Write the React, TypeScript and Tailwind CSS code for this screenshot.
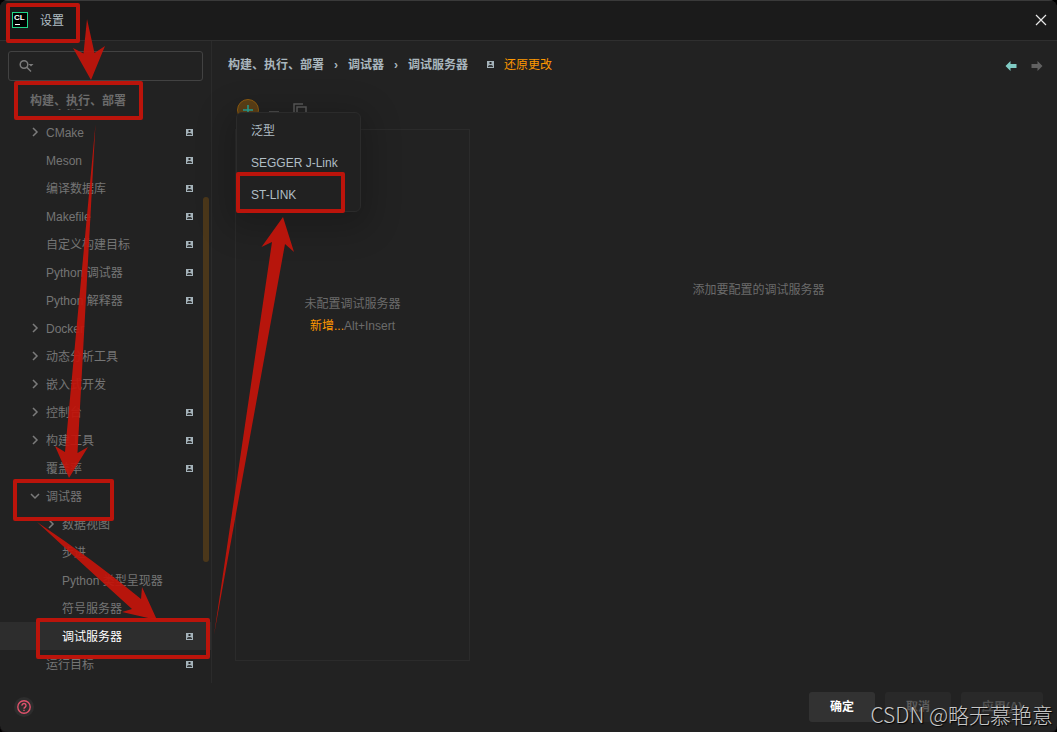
import { useState } from "react";
import clsx from "clsx";

type TreeItem = {
  label: string;
  level: 1 | 2;
  arrow?: "right" | "down";
  project?: boolean;
};

const items: TreeItem[] = [
  { label: "工具链", level: 1 },
  { label: "CMake", level: 1, arrow: "right", project: true },
  { label: "Meson", level: 1, project: true },
  { label: "编译数据库", level: 1, project: true },
  { label: "Makefile", level: 1, project: true },
  { label: "自定义构建目标", level: 1, project: true },
  { label: "Python 调试器", level: 1, project: true },
  { label: "Python 解释器", level: 1, project: true },
  { label: "Docker", level: 1, arrow: "right" },
  { label: "动态分析工具", level: 1, arrow: "right" },
  { label: "嵌入式开发", level: 1, arrow: "right" },
  { label: "控制台", level: 1, arrow: "right", project: true },
  { label: "构建工具", level: 1, arrow: "right", project: true },
  { label: "覆盖率", level: 1, project: true },
  { label: "调试器", level: 1, arrow: "down" },
  { label: "数据视图", level: 2, arrow: "right" },
  { label: "步进", level: 2 },
  { label: "Python 类型呈现器", level: 2 },
  { label: "符号服务器", level: 2 },
  { label: "调试服务器", level: 2, project: true },
  { label: "运行目标", level: 1, project: true },
];

const serverTypes = ["泛型", "SEGGER J-Link", "ST-LINK"];

function ProjectBadge() {
  return (
    <svg width="7" height="7" viewBox="0 0 7 7" className="shrink-0">
      <rect width="7" height="7" fill="#a5b3ba" />
      <rect x="2.5" y="1" width="2" height="2" fill="#222" />
      <path d="M1 6V5l1.5-1h2L6 5v1z" fill="#222" fillOpacity="0.85" />
    </svg>
  );
}

function Chevron({ dir }: { dir?: "right" | "down" }) {
  return (
    <svg width="12" height="12" viewBox="0 0 12 12" fill="none" stroke="#7b7b7b" strokeWidth="1.5" className="shrink-0">
      {dir === "right" && <path d="M4 2l4 4-4 4" />}
      {dir === "down" && <path d="M2 4l4 4 4-4" />}
    </svg>
  );
}

function TitleBar() {
  return (
    <header className="flex h-[41px] items-center border-t border-b border-t-[#3a3a3a] border-b-[#2f2f2f] bg-[#1b1b1b] pr-[10px] pb-px pl-3">
      <svg width="16" height="16" viewBox="0 0 16 16">
        <rect x="0.5" y="0.5" width="15" height="15" fill="#000" stroke="#21d789" />
        <text x="2" y="8" fontSize="8" fontWeight="700" fill="#fff">CL</text>
        <rect x="3" y="12" width="5" height="1" fill="#fff" />
      </svg>
      <h1 className="ml-3 flex-1 pt-[2px] text-[#b0bec5]">设置</h1>
      <button type="button" aria-label="关闭">
        <svg width="12" height="12" viewBox="0 0 12 12" stroke="#e8e8e8" strokeWidth="1.2">
          <path d="M1 1l10 10M11 1L1 11" />
        </svg>
      </button>
    </header>
  );
}

function Sidebar() {
  const [selected, setSelected] = useState("调试服务器");

  return (
    <aside className="relative w-[212px] shrink-0 border-r border-[#2b2b2b] pt-[10px] pb-[5px]">
      <label className="mr-2 ml-2 flex h-[30px] items-center rounded-[3px] border border-[#424242] pl-[10px]">
        <svg width="16" height="14" viewBox="0 0 16 14" fill="none" stroke="#7b7b7b" strokeWidth="1.5" className="shrink-0">
          <circle cx="5" cy="5.5" r="3.800" />
          <path d="M7.800 8.300l4.200 4.200" />
          <path d="M9.500 5h5L12 7.500z" fill="#7b7b7b" stroke="none" />
        </svg>
        <input aria-label="搜索设置" className="w-full min-w-0 bg-transparent text-[#b0bec5] outline-none" />
      </label>

      <div className="mt-[10px] flex h-[18px] items-center pt-[2px] pl-[30px] font-bold text-[#6b6b6b]">
        构建、执行、部署
      </div>

      <ul className="overflow-hidden">
        {items.map((item, i) => (
          <li key={item.label} className={clsx(i === 0 && "-mt-[19px]")}>
            <button
              type="button"
              onClick={() => setSelected(item.label)}
              className={clsx(
                "flex h-7 w-full items-center gap-[5px] pr-[18px] text-left",
                item.level === 1 ? "pl-[29px]" : "pl-[45px]",
                item.label === selected ? "bg-[#2d2d2d] text-white" : "text-[#757575]"
              )}
            >
              <Chevron dir={item.arrow} />
              <span className="flex-1 pt-[2px] whitespace-nowrap">{item.label}</span>
              {item.project && <ProjectBadge />}
            </button>
          </li>
        ))}
      </ul>

      {/* scrollbar thumb */}
      <div className="absolute top-[156px] right-[2px] h-[365px] w-[6px] rounded-full bg-[#4b371a]" />
    </aside>
  );
}

function Breadcrumbs() {
  return (
    <nav className="flex h-[49px] items-center pr-[14px] pb-[2px] pl-4 text-[#a9b6bd]">
      <ol className="flex items-center font-bold">
        <li>构建、执行、部署</li>
        <li className="w-6 text-center">›</li>
        <li>调试器</li>
        <li className="w-6 text-center">›</li>
        <li>调试服务器</li>
      </ol>
      <span className="mr-[10px] ml-[19px]">
        <ProjectBadge />
      </span>
      <a href="#revert" className="text-[#ff9800]">还原更改</a>
      <div className="mt-[2px] ml-auto flex gap-[14px]">
        <button type="button" aria-label="后退">
          <svg width="12" height="10" viewBox="0 0 12 10" fill="#80cbc4">
            <path d="M0.500 5L5.500 0v3h6v4h-6v3z" />
          </svg>
        </button>
        <button type="button" aria-label="前进" disabled>
          <svg width="12" height="10" viewBox="0 0 12 10" fill="#616161">
            <path d="M11.500 5L6.500 0v3h-6v4h6v3z" />
          </svg>
        </button>
      </div>
    </nav>
  );
}

function Toolbar() {
  return (
    <div className="relative flex h-[39px] items-center pl-[2px]">
      <button
        type="button"
        aria-label="添加"
        className="flex size-[22px] items-center justify-center rounded-full border border-[#8f5c10] bg-[#5c4017]"
      >
        <svg width="12" height="12" viewBox="0 0 12 12" stroke="#26a69a" strokeWidth="1.5">
          <path d="M6 1v10M1 6h10" />
        </svg>
      </button>
      <button type="button" aria-label="移除" disabled className="ml-[10px]">
        <svg width="10" height="12" viewBox="0 0 10 12" stroke="#4a4a4a" strokeWidth="2">
          <path d="M0 8h10" />
        </svg>
      </button>
      <button type="button" aria-label="复制" disabled className="ml-[14px]">
        <svg width="14" height="14" viewBox="0 0 14 14" fill="none" stroke="#5a5a5a" strokeWidth="1.5">
          <path d="M1 10V1h9" />
          <rect x="4" y="4" width="9" height="9" />
        </svg>
      </button>

      {/* add menu */}
      <ul className="absolute top-[22px] left-[1px] z-10 w-[125px] rounded-md border border-[#2b2b2b] bg-[#212121] pt-[2px] shadow-[0_8px_32px_10px_rgba(0,0,0,0.2)]">
        {serverTypes.map((name) => (
          <li key={name}>
            <button type="button" className="flex h-8 w-full items-center pl-[14px] text-[#b0bec5]">
              {name}
            </button>
          </li>
        ))}
      </ul>
    </div>
  );
}

function Servers() {
  return (
    <div className="flex flex-1 pr-[10px] pb-[22px] pl-[23px]">
      <section className="flex w-[235px] shrink-0 flex-col">
        <Toolbar />
        <div className="flex flex-1 flex-col items-center border border-[#2b2b2b] pt-[163px] leading-[22px] text-[#6b6b6b]">
          <p>未配置调试服务器</p>
          <p>
            <a href="#add" className="text-[#ff9800]">新增...</a>
            Alt+Insert
          </p>
        </div>
      </section>
      <p className="flex-1 pt-[189px] text-center leading-[22px] text-[#6b6b6b]">
        添加要配置的调试服务器
      </p>
    </div>
  );
}

function Footer() {
  return (
    <footer className="flex h-[49px] items-center gap-[10px] pr-[14px] pb-px pl-[14px]">
      <button
        type="button"
        aria-label="帮助"
        className="mr-auto flex size-5 items-center justify-center rounded-full bg-[#2d2d2d]"
      >
        <svg width="14" height="14" viewBox="0 0 14 14" fill="none" stroke="#e0526c" strokeWidth="1.4">
          <circle cx="7" cy="7" r="6.2" />
          <path d="M5 5.600a2 2 0 1 1 3.200 1.500C7.400 7.700 7 8 7 8.800M7 9.800v1.300" />
        </svg>
      </button>
      <button type="button" className="h-[30px] w-[66px] rounded-[3px] bg-[#323232] font-bold text-white">
        确定
      </button>
      <button type="button" className="h-[30px] w-[66px] rounded-[3px] bg-[#292929] font-bold text-[#5c5c5c]">
        取消
      </button>
      <button type="button" disabled className="h-[30px] w-[82px] rounded-[3px] bg-[#292929] font-bold text-[#505050]">
        应用(<u>A</u>)
      </button>
    </footer>
  );
}

// red frames and arrows that walk through the steps
function Annotations() {
  return (
    <svg
      width="1057"
      height="732"
      viewBox="0 0 1057 732"
      className="pointer-events-none absolute top-0 left-0 z-20"
    >
      <g fill="none" stroke="#bb140b" strokeWidth="4" strokeLinejoin="round">
        <rect x="8" y="5" width="70" height="36" />
        <rect x="16" y="83" width="125" height="35" />
        <rect x="238" y="174" width="105" height="37" />
        <rect x="15" y="481" width="97" height="38" />
        <rect x="38" y="620" width="170" height="37" />
      </g>
      <g fill="#c3140b" fillOpacity="0.93">
        <path d="M87 19L83.500 53.500 73 48 91 80 105 46 94.500 53z" />
        <path d="M95.500 124L65 452 55 446 69 478 88 447 77.500 453z" />
        <path d="M37 522Q90 571 132 609L122 612 157 620 142 587 141 599Q95 561 37 522z" />
        <path d="M214 635L272 242 261.500 247 283 217 294 252 285 244z" />
      </g>
    </svg>
  );
}

export default function App() {
  return (
    <div className="bg-black">
      <div className="relative flex min-h-screen flex-col overflow-hidden rounded-lg border-b-2 border-[#191517] bg-[#222222] font-['Liberation_Sans','Noto_Sans_CJK_SC',sans-serif] text-xs">
        <TitleBar />
        <div className="flex flex-1">
          <Sidebar />
          <main className="flex min-w-0 flex-1 flex-col">
            <Breadcrumbs />
            <Servers />
          </main>
        </div>
        <Footer />
        <Annotations />
        <div className="pointer-events-none absolute right-1 bottom-0 z-30 pb-[2px] font-['Noto_Sans_CJK_SC',sans-serif] text-[21px] leading-8 font-light text-[#c8c8c8] [text-shadow:1px_1px_1px_#000]">
          CSDN @略无慕艳意
        </div>
      </div>
    </div>
  );
}
